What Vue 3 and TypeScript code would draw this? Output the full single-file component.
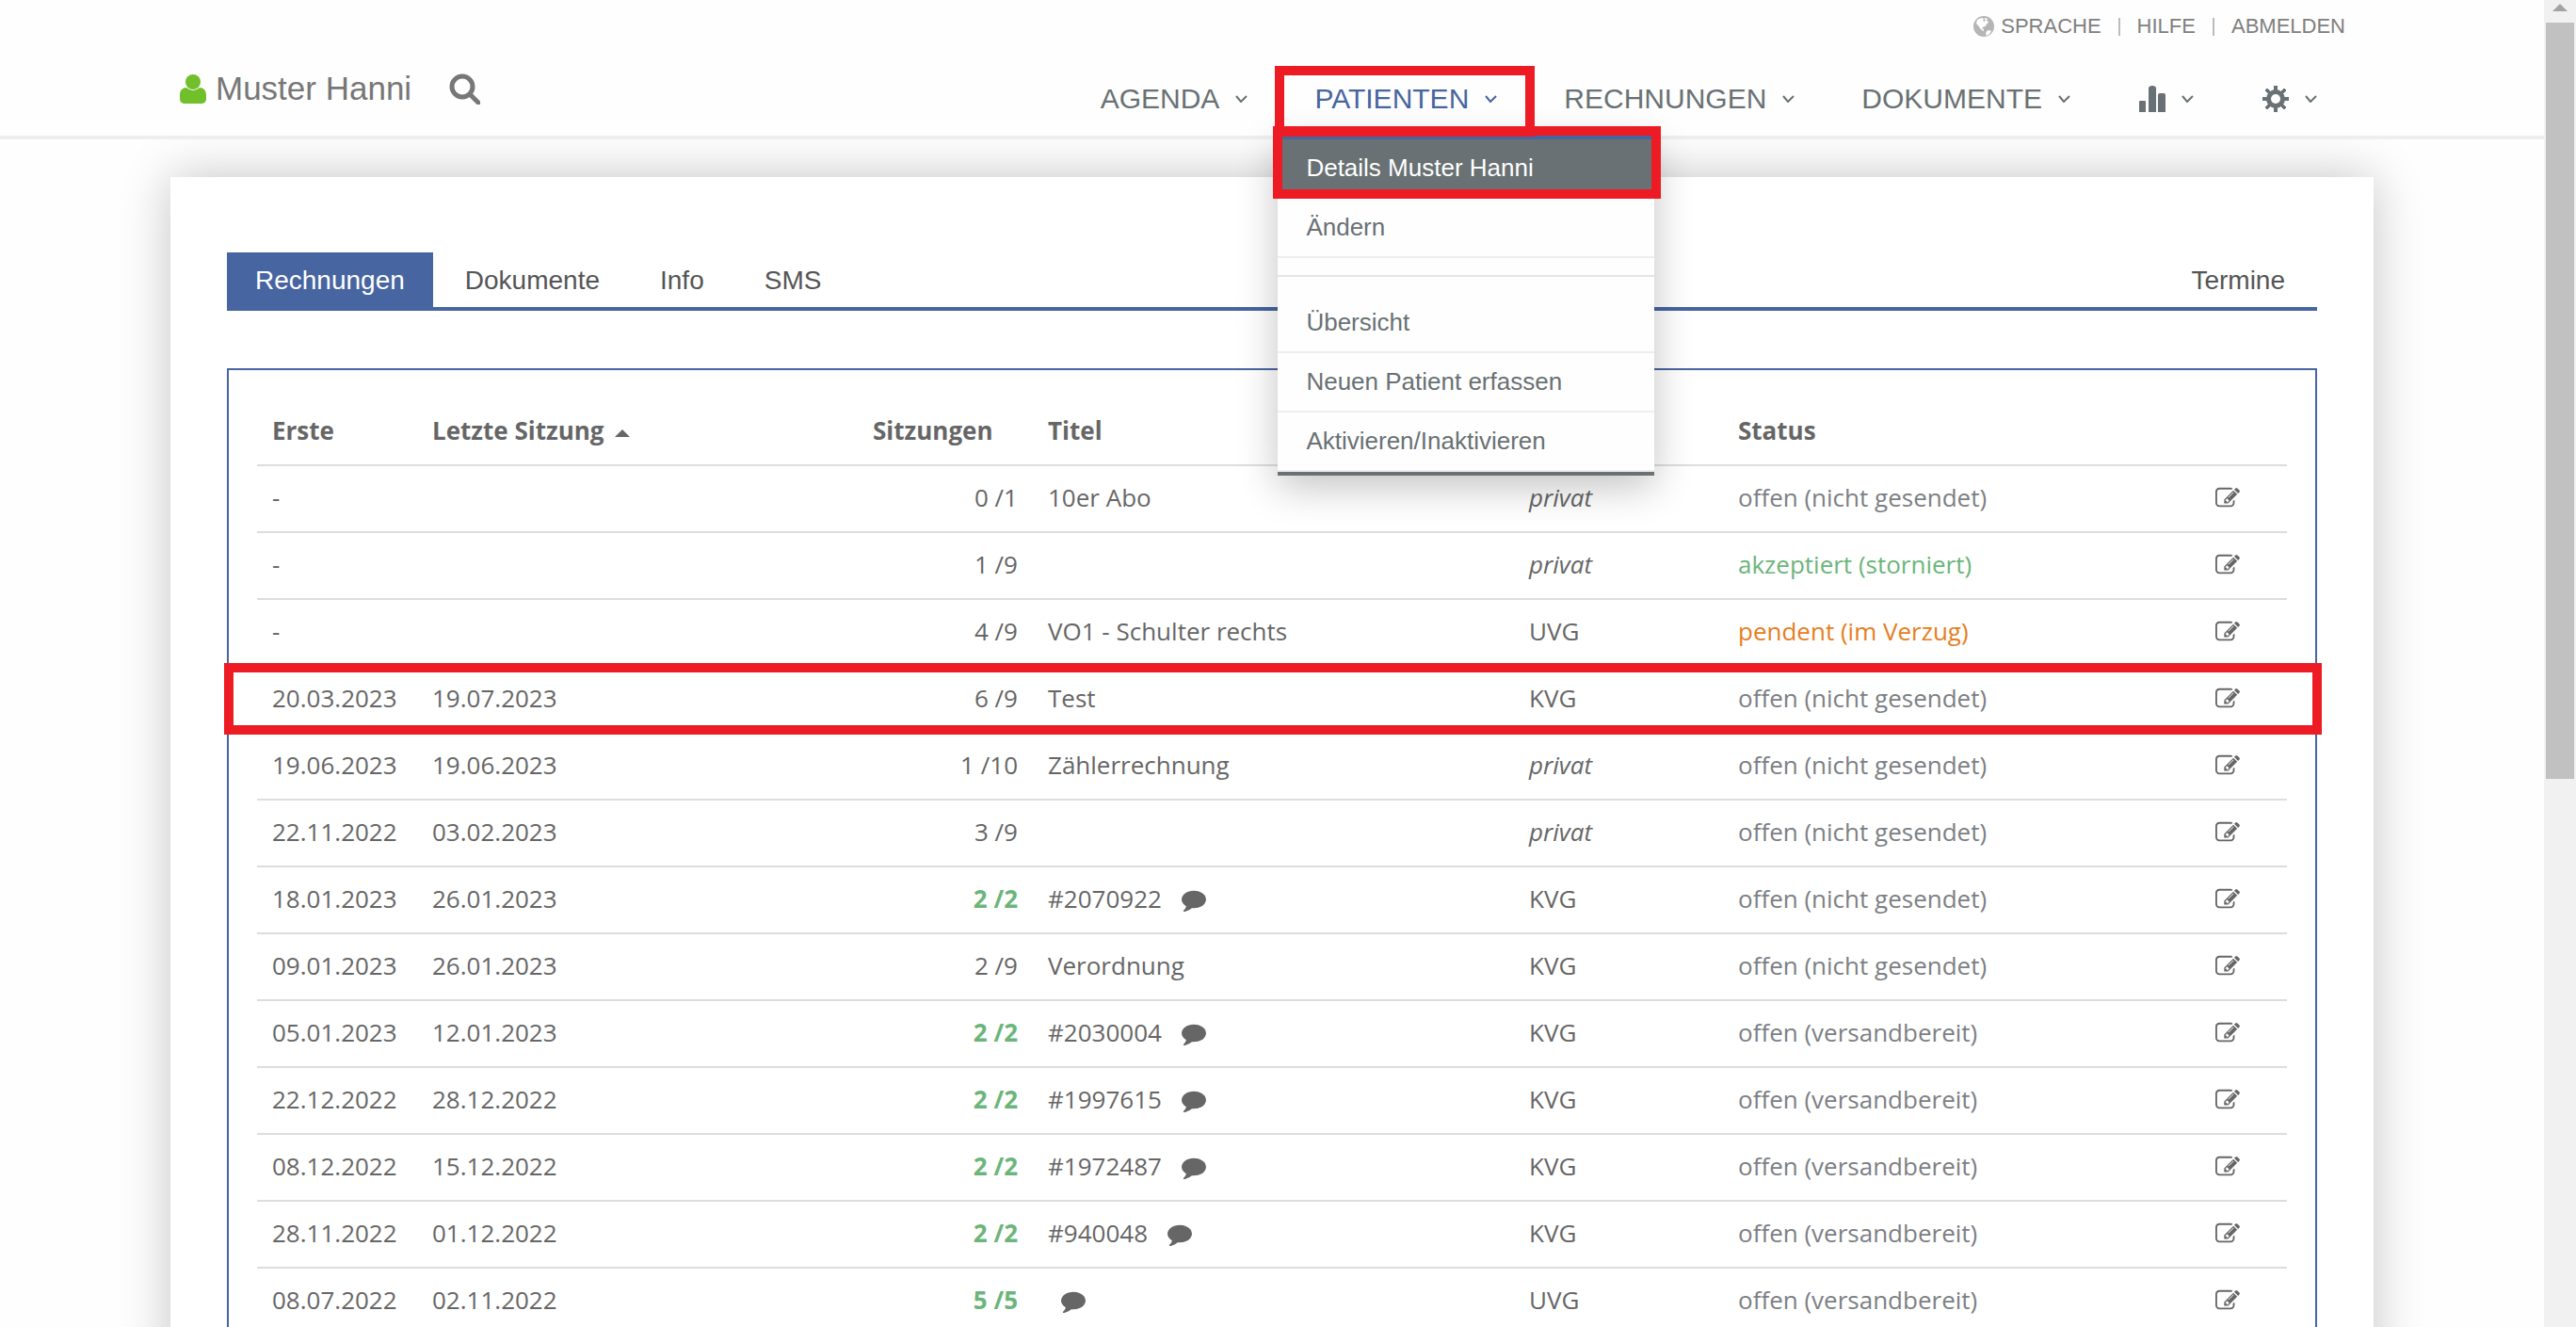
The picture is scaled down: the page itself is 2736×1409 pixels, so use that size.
<script setup lang="ts">
import { ref } from 'vue'

interface Invoice {
  first: string
  last: string
  sessions: string
  complete?: boolean
  title?: string
  comment?: boolean
  type: string
  status: string
  tone?: 'ok' | 'warn'
  marked?: boolean
}

const tabs = ['Rechnungen', 'Dokumente', 'Info', 'SMS']
const activeTab = ref('Rechnungen')

const invoices: Invoice[] = [
  { first: '-', last: '', sessions: '0 /1', title: '10er Abo', type: 'privat', status: 'offen (nicht gesendet)' },
  { first: '-', last: '', sessions: '1 /9', type: 'privat', status: 'akzeptiert (storniert)', tone: 'ok' },
  { first: '-', last: '', sessions: '4 /9', title: 'VO1 - Schulter rechts', type: 'UVG', status: 'pendent (im Verzug)', tone: 'warn' },
  { first: '20.03.2023', last: '19.07.2023', sessions: '6 /9', title: 'Test', type: 'KVG', status: 'offen (nicht gesendet)', marked: true },
  { first: '19.06.2023', last: '19.06.2023', sessions: '1 /10', title: 'Zählerrechnung', type: 'privat', status: 'offen (nicht gesendet)' },
  { first: '22.11.2022', last: '03.02.2023', sessions: '3 /9', type: 'privat', status: 'offen (nicht gesendet)' },
  { first: '18.01.2023', last: '26.01.2023', sessions: '2 /2', complete: true, title: '#2070922', comment: true, type: 'KVG', status: 'offen (nicht gesendet)' },
  { first: '09.01.2023', last: '26.01.2023', sessions: '2 /9', title: 'Verordnung', type: 'KVG', status: 'offen (nicht gesendet)' },
  { first: '05.01.2023', last: '12.01.2023', sessions: '2 /2', complete: true, title: '#2030004', comment: true, type: 'KVG', status: 'offen (versandbereit)' },
  { first: '22.12.2022', last: '28.12.2022', sessions: '2 /2', complete: true, title: '#1997615', comment: true, type: 'KVG', status: 'offen (versandbereit)' },
  { first: '08.12.2022', last: '15.12.2022', sessions: '2 /2', complete: true, title: '#1972487', comment: true, type: 'KVG', status: 'offen (versandbereit)' },
  { first: '28.11.2022', last: '01.12.2022', sessions: '2 /2', complete: true, title: '#940048', comment: true, type: 'KVG', status: 'offen (versandbereit)' },
  { first: '08.07.2022', last: '02.11.2022', sessions: '5 /5', complete: true, comment: true, type: 'UVG', status: 'offen (versandbereit)' },
]
</script>

<template>
  <div class="window">
    <div class="page">
      <header class="header">
        <div class="container header-inner">
          <div class="topbar">
            <a href="#" class="top-link language">
              <svg class="globe" viewBox="0 0 22 22" aria-hidden="true">
                <circle cx="11" cy="11" r="11" fill="#b5b5b5" />
                <path fill="#fff" d="M6 3 9 2l2 1 2-1 2 1-1 2 2 1-1 2-2 1 1 1-2 1-2 1-1 1 2 1v2l-2-1-2-2-2-3-2-2 1-4z" />
                <path fill="#fff" d="m14 16 3-1 2 1-2 3-3 2-1-2z" />
                <path fill="#b5b5b5" d="m10 4 2-1 1 2-2 1z" />
              </svg>
              SPRACHE
            </a>
            <span class="separator"></span>
            <a href="#" class="top-link">HILFE</a>
            <span class="separator"></span>
            <a href="#" class="top-link">ABMELDEN</a>
          </div>
          <div class="mainbar">
            <div class="brand">
              <a href="#" class="patient">
                <svg class="person" viewBox="0 0 28 31" aria-hidden="true">
                  <circle cx="14" cy="8" r="8" />
                  <path d="M7 14C2 14 0 18 0 22v4q0 5 6 5h16q6 0 6-5v-4c0-4-2-8-7-8q-3 3-7 3t-7-3z" />
                </svg>
                Muster Hanni
              </a>
              <button class="search" type="button" aria-label="Suchen">
                <svg viewBox="0 0 33 33" aria-hidden="true">
                  <circle cx="14" cy="14" r="11" fill="none" stroke="#777" stroke-width="5" />
                  <path d="m22 22 9 9" stroke="#777" stroke-width="5" stroke-linecap="round" />
                </svg>
              </button>
            </div>
            <nav>
              <ul class="menu">
                <li class="menu-item">
                  <button type="button">AGENDA<svg class="chevron" viewBox="0 0 13 8"><path d="m1 1 5 6 6-6" /></svg></button>
                </li>
                <li class="menu-item open">
                  <button type="button">PATIENTEN<svg class="chevron" viewBox="0 0 13 8"><path d="m1 1 5 6 6-6" /></svg></button>
                  <span class="mark mark-menu"></span>
                  <ul class="dropdown">
                    <li class="selected"><a href="#">Details Muster Hanni</a><span class="mark mark-entry"></span></li>
                    <li><a href="#">Ändern</a></li>
                    <li class="divider" role="separator"></li>
                    <li><a href="#">Übersicht</a></li>
                    <li><a href="#">Neuen Patient erfassen</a></li>
                    <li><a href="#">Aktivieren/Inaktivieren</a></li>
                  </ul>
                </li>
                <li class="menu-item">
                  <button type="button">RECHNUNGEN<svg class="chevron" viewBox="0 0 13 8"><path d="m1 1 5 6 6-6" /></svg></button>
                </li>
                <li class="menu-item">
                  <button type="button">DOKUMENTE<svg class="chevron" viewBox="0 0 13 8"><path d="m1 1 5 6 6-6" /></svg></button>
                </li>
                <li class="menu-item">
                  <button type="button" aria-label="Statistik">
                    <svg class="glyph" viewBox="0 0 28 28"><path d="M0 17q0-1 1-1h5q1 0 1 1v11H0zM10 3q0-3 4-3t4 3v25h-8zM20 10q0-2 2-2h4q2 0 2 2v18h-8z" /></svg>
                    <svg class="chevron" viewBox="0 0 13 8"><path d="m1 1 5 6 6-6" /></svg>
                  </button>
                </li>
                <li class="menu-item">
                  <button type="button" aria-label="Einstellungen">
                    <svg class="glyph" viewBox="0 0 28 28">
                      <path d="M12 0h4v28h-4zM0 12h28v4H0z" />
                      <path d="m5 3 20 20-2 2L3 5zM23 3 3 23l2 2L25 5z" stroke="#697174" stroke-width="1" />
                      <circle cx="14" cy="14" r="10" />
                      <circle cx="14" cy="14" r="5" fill="#fff" />
                    </svg>
                    <svg class="chevron" viewBox="0 0 13 8"><path d="m1 1 5 6 6-6" /></svg>
                  </button>
                </li>
              </ul>
            </nav>
          </div>
        </div>
      </header>

      <main class="container card">
        <div class="tabs" role="tablist">
          <button
            v-for="tab in tabs"
            :key="tab"
            type="button"
            role="tab"
            class="tab"
            :class="{ active: tab === activeTab }"
            :aria-selected="tab === activeTab"
            @click="activeTab = tab"
          >{{ tab }}</button>
          <button type="button" role="tab" class="tab tab-end">Termine</button>
        </div>

        <section class="panel">
          <table>
            <colgroup>
              <col class="col-first"><col class="col-last"><col class="col-sessions"><col>
              <col class="col-type"><col class="col-status"><col class="col-edit">
            </colgroup>
            <thead>
              <tr>
                <th>Erste</th>
                <th>Letzte Sitzung<svg class="sort" viewBox="0 0 16 8"><path d="m0 8 8-8 8 8z" /></svg></th>
                <th>Sitzungen</th>
                <th>Titel</th>
                <th></th>
                <th>Status</th>
                <th></th>
              </tr>
            </thead>
            <tbody>
              <tr v-for="(row, i) in invoices" :key="i">
                <td>{{ row.first }}<span v-if="row.marked" class="mark mark-row"></span></td>
                <td>{{ row.last }}</td>
                <td class="sessions" :class="{ complete: row.complete }">{{ row.sessions }}</td>
                <td>{{ row.title ? row.title + ' ' : '' }}<svg v-if="row.comment" class="comment" viewBox="0 0 1792 1792"><path d="M1792 896q0 174-120 321.500t-326 233-450 85.500q-70 0-145-8-198 175-460 242-49 14-114 22-17 2-30.500-9t-17.500-29v-1q-3-4-.5-12t2-10 4.500-9.500l6-9 7-8.500 8-9q7-8 31-34.500t34.500-38 31-39.500 32.500-51 27-59 26-76q-157-89-247.500-220t-90.500-281q0-130 71-248.500t191-204.500 286-136.500 348-50.500q244 0 450 85.500t326 233 120 321.500z" /></svg></td>
                <td><em v-if="row.type === 'privat'">{{ row.type }}</em><template v-else>{{ row.type }}</template></td>
                <td class="status" :class="row.tone">{{ row.status }}</td>
                <td>
                  <button type="button" class="edit" aria-label="Bearbeiten">
                    <svg viewBox="0 0 1792 1792"><path d="M888 1184l116-116-152-152-116 116v56h96v96h56zm440-720q-16-16-33 1l-350 350q-17 17-1 33t33-1l350-350q17-17 1-33zm80 594v190q0 119-84.500 203.500t-203.500 84.500h-832q-119 0-203.500-84.500t-84.500-203.500v-832q0-119 84.500-203.500t203.500-84.500h832q63 0 117 25 15 7 18 23 3 17-9 29l-49 49q-14 14-32 8-23-6-45-6h-832q-66 0-113 47t-47 113v832q0 66 47 113t113 47h832q66 0 113-47t47-113v-126q0-13 9-22l64-64q15-15 35-7t20 29zm-96-738l288 288-672 672h-288v-288zm444 132l-92 92-288-288 92-92q28-28 68-28t68 28l152 152q28 28 28 68t-28 68z" /></svg>
                  </button>
                </td>
              </tr>
            </tbody>
          </table>
        </section>
      </main>
    </div>
    <div class="scrollbar" aria-hidden="true">
      <svg class="scroll-up" viewBox="0 0 16 8"><path d="m0 8 8-8 8 8z" /></svg>
      <div class="thumb"></div>
    </div>
  </div>
</template>

<style>
body {
  margin: 0;
  background: #fefefe;
}
</style>

<style scoped>
* {
  box-sizing: border-box;
}

.window {
  display: flex;
  height: 100vh;
  overflow: hidden;
  font-family: "Liberation Sans", Arial, sans-serif;
}

.page {
  flex: 1;
  min-width: 0;
}

.container {
  max-width: 2340px;
  margin: 0 auto;
}

a {
  color: inherit;
  text-decoration: none;
}

button {
  padding: 0;
  border: 0;
  background: none;
  color: inherit;
  font: inherit;
}

ul {
  margin: 0;
  padding: 0;
  list-style: none;
}

svg {
  flex: none;
}

/* Header */
.header {
  position: relative;
  z-index: 2;
  border-bottom: 4px solid #eee;
  background: #fefefe;
}

.topbar {
  display: flex;
  justify-content: flex-end;
  align-items: center;
  gap: 18px;
  height: 56px;
  padding-right: 30px;
  font-size: 22px;
  color: #808080;
}

.language {
  display: flex;
  align-items: center;
  gap: 7px;
}

.globe {
  width: 22px;
  height: 22px;
}

.separator {
  width: 2px;
  height: 19px;
  background: #bbb;
}

.mainbar {
  display: flex;
  justify-content: space-between;
  align-items: flex-start;
  height: 88px;
  padding: 0 60px 0 10px;
}

.brand {
  display: flex;
  align-items: center;
  gap: 40px;
  height: 76px;
  font-size: 35px;
  color: #777;
}

.patient {
  display: flex;
  align-items: center;
  gap: 10px;
}

.person {
  width: 28px;
  height: 31px;
  fill: #70bf2b;
}

.search svg {
  display: block;
  width: 33px;
  height: 33px;
}

.menu {
  display: flex;
  gap: 71px;
  font-size: 30px;
  color: #697174;
}

.menu-item {
  position: relative;
  display: flex;
  align-items: center;
  height: 88px;
  padding-top: 10px;
}

.menu-item.open > button {
  color: #4765a0;
}

.menu-item > button {
  display: flex;
  align-items: center;
  gap: 17px;
}

.chevron {
  width: 13px;
  height: 8px;
  fill: none;
  stroke: currentColor;
  stroke-width: 2;
}

.glyph {
  width: 28px;
  height: 28px;
  margin-left: 2px;
  fill: #697174;
}

.dropdown {
  position: absolute;
  top: 100%;
  left: -39px;
  width: 400px;
  border-top: 4px solid #4765a0;
  border-bottom: 4px solid #697174;
  background: #fefefe;
  box-shadow: 0 12px 40px rgba(0, 0, 0, 0.24);
  font-size: 26px;
}

.dropdown li {
  position: relative;
  border-bottom: 2px solid #eee;
}

.dropdown a {
  display: block;
  padding: 0 30px;
  line-height: 61px;
}

.dropdown .selected {
  border-bottom-color: #697174;
  background: #697174;
  color: #fff;
}

.dropdown .divider {
  margin: 18px 0;
  border-color: #e5e5e5;
}

/* Red highlight frames */
.mark {
  position: absolute;
  z-index: 1;
  border: 10px solid #ed1c24;
  pointer-events: none;
}

.mark-menu {
  inset: 14px -40px -1px -42px;
}

.mark-entry {
  inset: -14px -7px -2px -5px;
}

.mark-row {
  inset: -4px -37px -1px -35px;
}

/* Card */
.card {
  margin-top: 40px;
  padding: 80px 60px;
  background: #fff;
  box-shadow: 0 0 50px rgba(0, 0, 0, 0.23);
}

.tabs {
  display: flex;
  gap: 4px;
  padding-right: 4px;
  border-bottom: 4px solid #4765a0;
}

.tab {
  padding: 2px 30px 0;
  font-size: 28px;
  line-height: 56px;
  color: #555;
}

.tab.active {
  background: #4765a0;
  color: #fff;
}

.tab-end {
  margin-left: auto;
}

.panel {
  margin-top: 61px;
  padding: 31px 30px 30px;
  border: 2px solid #4765a0;
}

table {
  width: 100%;
  border-spacing: 0;
  table-layout: fixed;
  font-family: "Open Sans", sans-serif;
  font-size: 26px;
  line-height: 36px;
  color: #666;
}

.col-first {
  width: 170px;
}

.col-last {
  width: 468px;
}

.col-sessions {
  width: 186px;
}

.col-type {
  width: 222px;
}

.col-status {
  width: 507px;
}

.col-edit {
  width: 92px;
}

tr {
  position: relative;
}

th,
td {
  height: 71px;
  padding: 0 16px 4px;
  border-bottom: 2px solid #ddd;
  text-align: left;
  white-space: nowrap;
}

.sort {
  width: 16px;
  height: 8px;
  margin-left: 11px;
  vertical-align: 3px;
  fill: #666;
}

.sessions {
  text-align: right;
}

.complete {
  color: #6cb57a;
  font-weight: 700;
}

.comment {
  width: 26px;
  height: 26px;
  margin-left: 14px;
  vertical-align: -4px;
  fill: #666;
}

.status {
  color: #7c8084;
}

.status.ok {
  color: #6cb57a;
}

.status.warn {
  color: #e67e22;
}

.edit {
  vertical-align: -4px;
}

.edit svg {
  display: block;
  width: 26px;
  height: 26px;
  fill: #666;
}

/* Scrollbar */
.scrollbar {
  display: flex;
  flex: none;
  flex-direction: column;
  align-items: center;
  width: 34px;
  background: #f1f1f1;
}

.scroll-up {
  width: 16px;
  height: 8px;
  margin: 4px 0 12px;
  fill: #a3a3a3;
}

.thumb {
  width: 30px;
  height: 57%;
  background: #c1c1c1;
}
</style>
